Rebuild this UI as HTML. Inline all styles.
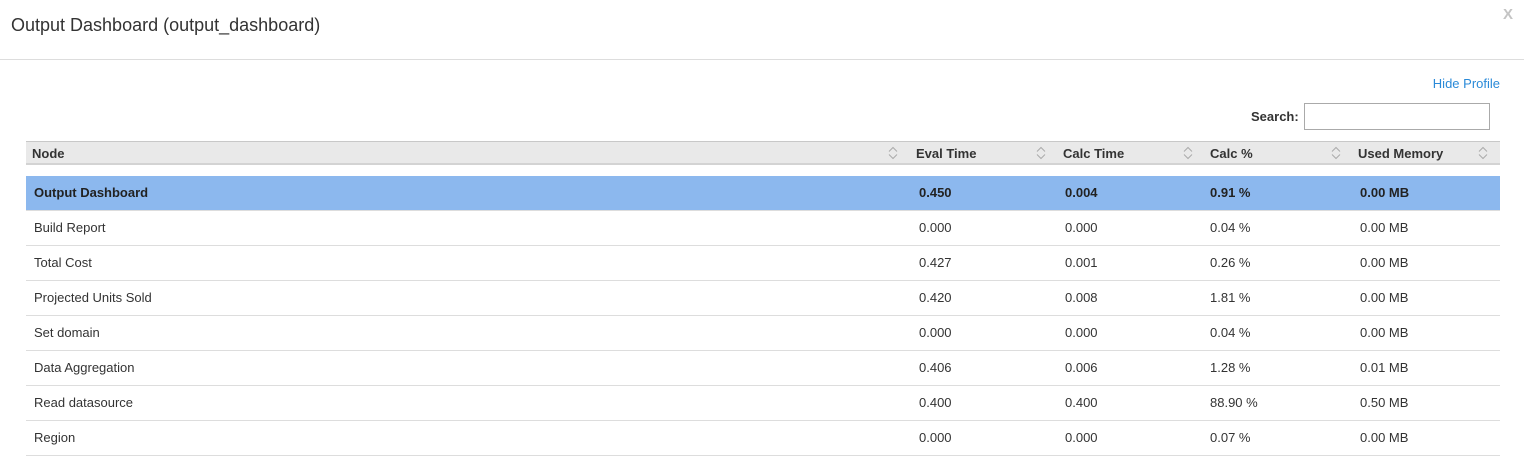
<!DOCTYPE html>
<html><head><style>
*{margin:0;padding:0;box-sizing:border-box}
body{width:1524px;height:455px;background:#fff;font-family:"Liberation Sans",Arial,sans-serif;color:#333;position:relative;overflow:hidden}
.title{position:absolute;left:11px;top:15px;font-size:18px;color:#333}
.x{position:absolute;left:1503px;top:6px;font-size:15px;font-weight:bold;color:#c4c4c4}
.hr{position:absolute;left:0;top:59px;width:1524px;height:1px;background:#ddd}
.hide{position:absolute;right:24px;top:76px;font-size:13px;color:#2a8ad8}
.slab{position:absolute;left:1251px;top:109px;font-size:13px;font-weight:bold}
.sin{position:absolute;left:1304px;top:103px;width:186px;height:27px;border:1px solid #aaa}
.head{position:absolute;left:26px;top:141px;width:1474px;height:24px;background:#e9e9e9;border-top:1px solid #c8c8c8;border-bottom:2px solid #d3d3d3}
.hc{position:absolute;top:4px;font-size:13px;font-weight:bold;color:#333}
.si{position:absolute;top:4px}
.row{position:absolute;left:26px;width:1474px;height:35px;border-bottom:1px solid #ddd;font-size:13px}
.row span{position:absolute;top:9px}
.sel{background:#8cb8ee;font-weight:bold;color:#222}
</style></head><body>
<div class="title">Output Dashboard (output_dashboard)</div>
<div class="x">X</div>
<div class="hr"></div>
<div class="hide">Hide Profile</div>
<div class="slab">Search:</div>
<div class="sin"></div>
<div class="head">
<span class="hc" style="left:6px">Node</span>
<span class="hc" style="left:890px">Eval Time</span>
<span class="hc" style="left:1037px">Calc Time</span>
<span class="hc" style="left:1184px">Calc %</span>
<span class="hc" style="left:1332px">Used Memory</span>
<svg class="si" style="left:862px" width="10" height="14"><path d="M1 5.5L5 1.5L9 5.5M1 8.5L5 12.5L9 8.5" fill="none" stroke="#aaa" stroke-width="1"/></svg>
<svg class="si" style="left:1010px" width="10" height="14"><path d="M1 5.5L5 1.5L9 5.5M1 8.5L5 12.5L9 8.5" fill="none" stroke="#aaa" stroke-width="1"/></svg>
<svg class="si" style="left:1157px" width="10" height="14"><path d="M1 5.5L5 1.5L9 5.5M1 8.5L5 12.5L9 8.5" fill="none" stroke="#aaa" stroke-width="1"/></svg>
<svg class="si" style="left:1305px" width="10" height="14"><path d="M1 5.5L5 1.5L9 5.5M1 8.5L5 12.5L9 8.5" fill="none" stroke="#aaa" stroke-width="1"/></svg>
<svg class="si" style="left:1452px" width="10" height="14"><path d="M1 5.5L5 1.5L9 5.5M1 8.5L5 12.5L9 8.5" fill="none" stroke="#aaa" stroke-width="1"/></svg>
</div>
<div class="row sel" style="top:176px"><span style="left:8px">Output Dashboard</span><span style="left:893px">0.450</span><span style="left:1039px">0.004</span><span style="left:1184px">0.91 %</span><span style="left:1334px">0.00 MB</span></div>
<div class="row" style="top:211px"><span style="left:8px">Build Report</span><span style="left:893px">0.000</span><span style="left:1039px">0.000</span><span style="left:1184px">0.04 %</span><span style="left:1334px">0.00 MB</span></div>
<div class="row" style="top:246px"><span style="left:8px">Total Cost</span><span style="left:893px">0.427</span><span style="left:1039px">0.001</span><span style="left:1184px">0.26 %</span><span style="left:1334px">0.00 MB</span></div>
<div class="row" style="top:281px"><span style="left:8px">Projected Units Sold</span><span style="left:893px">0.420</span><span style="left:1039px">0.008</span><span style="left:1184px">1.81 %</span><span style="left:1334px">0.00 MB</span></div>
<div class="row" style="top:316px"><span style="left:8px">Set domain</span><span style="left:893px">0.000</span><span style="left:1039px">0.000</span><span style="left:1184px">0.04 %</span><span style="left:1334px">0.00 MB</span></div>
<div class="row" style="top:351px"><span style="left:8px">Data Aggregation</span><span style="left:893px">0.406</span><span style="left:1039px">0.006</span><span style="left:1184px">1.28 %</span><span style="left:1334px">0.01 MB</span></div>
<div class="row" style="top:386px"><span style="left:8px">Read datasource</span><span style="left:893px">0.400</span><span style="left:1039px">0.400</span><span style="left:1184px">88.90 %</span><span style="left:1334px">0.50 MB</span></div>
<div class="row" style="top:421px"><span style="left:8px">Region</span><span style="left:893px">0.000</span><span style="left:1039px">0.000</span><span style="left:1184px">0.07 %</span><span style="left:1334px">0.00 MB</span></div>
</body></html>
